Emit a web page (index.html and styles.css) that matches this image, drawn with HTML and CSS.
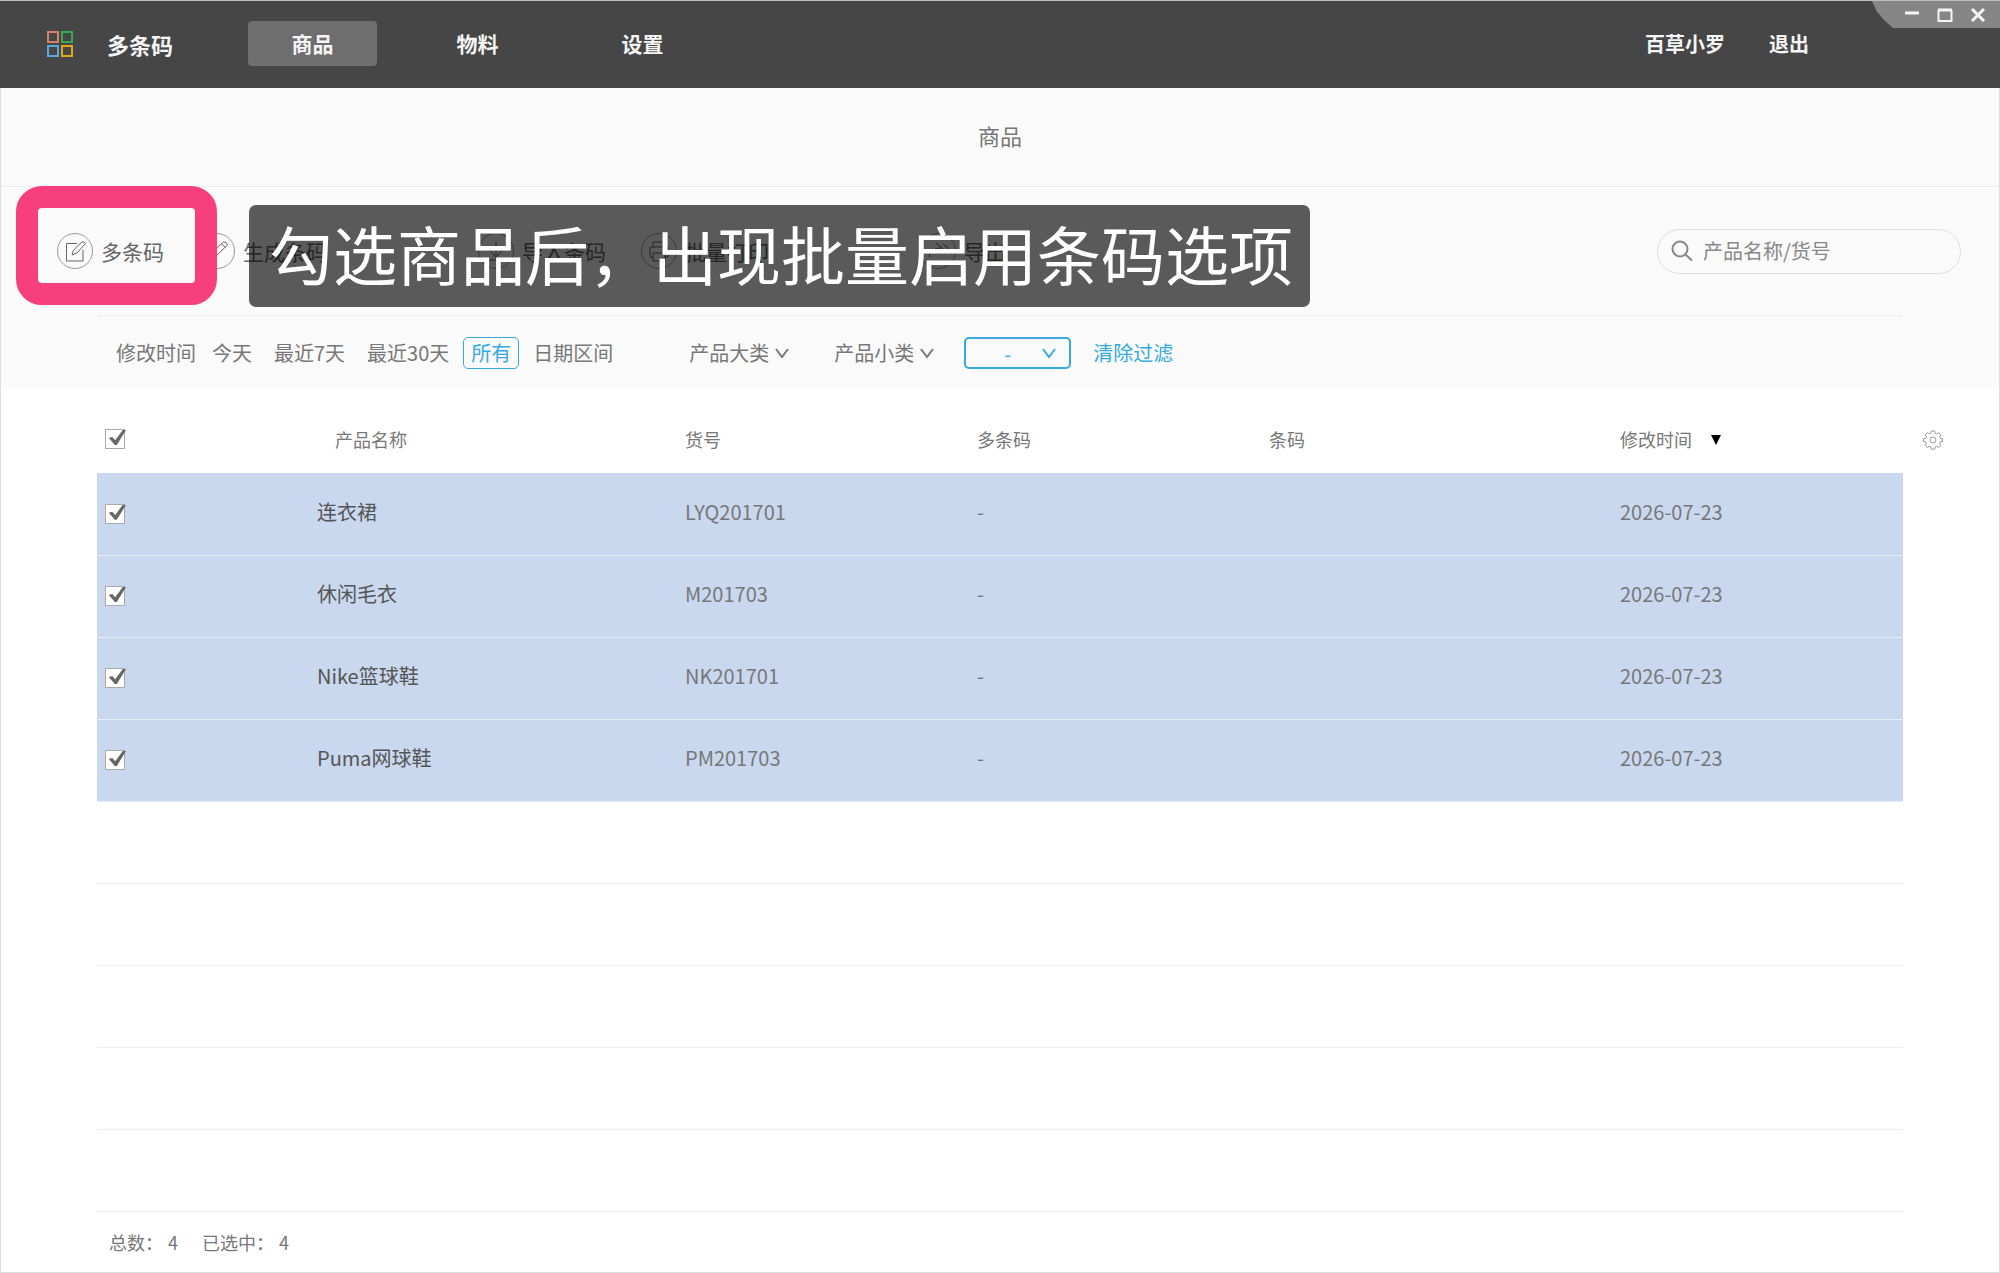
FILE: index.html
```html
<!DOCTYPE html>
<html lang="zh-CN">
<head>
<meta charset="utf-8"/>
<title>多条码</title>
<link rel="stylesheet" href="styles.css">
</head>
<body>
  <header class="topbar">
    <div class="brand">
      <svg class="logo" viewBox="0 0 26 26" width="26" height="26" fill="none" stroke-width="2">
        <rect x="1" y="1" width="10" height="10" stroke="#d9806a"/>
        <rect x="15" y="1" width="10" height="10" stroke="#35a853"/>
        <rect x="1" y="15" width="10" height="10" stroke="#5aa9dd"/>
        <rect x="15" y="15" width="10" height="10" stroke="#e0a61c"/>
      </svg>
      <span>多条码</span>
    </div>
    <nav class="nav">
      <a class="active" href="#">商品</a>
      <a href="#">物料</a>
      <a href="#">设置</a>
    </nav>
    <div class="user">
      <a href="#">百草小罗</a>
      <a href="#">退出</a>
    </div>
    <div class="window">
      <button aria-label="最小化"><svg viewBox="0 0 16 16" width="16" height="16"><path d="M1 6h14" stroke-width="3"/></svg></button>
      <button aria-label="最大化"><svg viewBox="0 0 16 16" width="16" height="16"><path d="M1.5 3v11h13V3"/><path d="M1 3h14" stroke-width="3"/></svg></button>
      <button aria-label="关闭"><svg viewBox="0 0 16 16" width="16" height="16"><path d="M2 2l12 12M14 2L2 14" stroke-width="3"/></svg></button>
    </div>
  </header>

  <main class="page">
    <h1 class="title">商品</h1>

    <div class="toolbar">
      <div class="tools">
        <button class="tool">
          <svg class="icon" viewBox="0 0 36 36" width="36" height="36">
            <circle cx="18" cy="18" r="17.5"/>
            <path d="M20 10.500H9.500V28h16.500V17"/>
            <path d="M15 22l1.500-5 8.500-8q2.500-.8 3.500 1.500L20 20z"/>
          </svg>
          多条码
        </button>
        <button class="tool">
          <svg class="icon" viewBox="0 0 36 36" width="36" height="36">
            <circle cx="18" cy="18" r="17.5"/>
            <path d="M9 27l2-6L24.500 9q3.500-.5 4 3L15 25z M22.500 11l4 3.500"/>
          </svg>
          生成条码
        </button>
      </div>
      <div class="tools">
        <button class="tool">
          <svg class="icon" viewBox="0 0 36 36" width="36" height="36">
            <circle cx="18" cy="18" r="17.5"/>
            <path d="M18 9v15M12 18l6 6 6-6M10 27h16"/>
          </svg>
          导入条码
        </button>
        <button class="tool">
          <svg class="icon" viewBox="0 0 36 36" width="36" height="36">
            <circle cx="18" cy="18" r="17.5"/>
            <path d="M12 14V9h12v5M12 24H9V14h18v10h-3M12 20h12v8H12z"/>
          </svg>
          批量打印
        </button>
      </div>
      <div class="tools">
        <button class="tool">
          <svg class="icon" viewBox="0 0 36 36" width="36" height="36">
            <circle cx="18" cy="18" r="17.5"/>
            <path d="M9 24q2-9 12-9M16 10l6 5-4 6M23 11l5 4-4 6"/>
          </svg>
          导出
        </button>
      </div>
      <label class="search">
        <svg viewBox="0 0 22 22" width="22" height="22"><circle cx="9" cy="9" r="7.5"/><path d="M14.500 14.500l6.500 6"/></svg>
        <input type="text" placeholder="产品名称/货号" aria-label="产品名称/货号">
      </label>
      <div class="highlight"></div>
      <div class="tip">勾选商品后，出现批量启用条码选项</div>
    </div>

    <div class="filter">
      <span class="filter-name">修改时间</span>
      <div class="ranges">
        <button>今天</button>
        <button>最近7天</button>
        <button>最近30天</button>
        <button class="on">所有</button>
        <button>日期区间</button>
      </div>
      <div class="pick">
        <select aria-label="产品大类"><option>产品大类</option></select>
        <svg viewBox="0 0 14 10" width="14" height="10"><path d="M1 1l6 8 6-8"/></svg>
      </div>
      <div class="pick">
        <select aria-label="产品小类"><option>产品小类</option></select>
        <svg viewBox="0 0 14 10" width="14" height="10"><path d="M1 1l6 8 6-8"/></svg>
      </div>
      <div class="pick boxed">
        <select aria-label="条码"><option>-</option></select>
        <svg viewBox="0 0 14 10" width="14" height="10"><path d="M1 1l6 8 6-8"/></svg>
      </div>
      <button class="clear">清除过滤</button>
    </div>

    <div class="list">
      <table class="goods">
        <thead>
          <tr>
            <th class="c-check"><input type="checkbox" checked aria-label="全选"></th>
            <th class="c-name">产品名称</th>
            <th class="c-code">货号</th>
            <th class="c-multi">多条码</th>
            <th class="c-bar">条码</th>
            <th>修改时间<svg class="sort" viewBox="0 0 10 10" width="10" height="10"><path d="M0 0h10L5 10z"/></svg></th>
          </tr>
        </thead>
        <tbody>
          <tr class="selected">
            <td><input type="checkbox" checked aria-label="连衣裙"></td>
            <td class="name">连衣裙</td>
            <td>LYQ201701</td>
            <td>-</td>
            <td></td>
            <td>2026-07-23</td>
          </tr>
          <tr class="selected">
            <td><input type="checkbox" checked aria-label="休闲毛衣"></td>
            <td class="name">休闲毛衣</td>
            <td>M201703</td>
            <td>-</td>
            <td></td>
            <td>2026-07-23</td>
          </tr>
          <tr class="selected">
            <td><input type="checkbox" checked aria-label="Nike篮球鞋"></td>
            <td class="name">Nike篮球鞋</td>
            <td>NK201701</td>
            <td>-</td>
            <td></td>
            <td>2026-07-23</td>
          </tr>
          <tr class="selected">
            <td><input type="checkbox" checked aria-label="Puma网球鞋"></td>
            <td class="name">Puma网球鞋</td>
            <td>PM201703</td>
            <td>-</td>
            <td></td>
            <td>2026-07-23</td>
          </tr>
          <tr><td colspan="6"></td></tr>
          <tr><td colspan="6"></td></tr>
          <tr><td colspan="6"></td></tr>
          <tr><td colspan="6"></td></tr>
          <tr><td colspan="6"></td></tr>
        </tbody>
      </table>
      <button class="gear" aria-label="列设置">
        <svg viewBox="0 0 20 20" width="20" height="20">
          <path d="M8.300 1h3.400l.5 2.300 1.500.6 2-1.300 2.200 2.200-1.300 2 .6 1.500 2.300.5v2.600l-2.300.5-.6 1.500 1.300 2-2.200 2.200-2-1.300-1.500.6-.5 2.300H8.300l-.5-2.300-1.500-.6-2 1.300-2.200-2.200 1.300-2-.6-1.500L.5 11.400V8.800l2.300-.5.6-1.500-1.300-2 2.200-2.200 2 1.300 1.500-.6z"/>
          <circle cx="10" cy="10" r="3"/>
        </svg>
      </button>
    </div>

    <footer class="total">
      <span>总数：<b>4</b></span>
      <span>已选中：<b>4</b></span>
    </footer>
  </main>
</body>
</html>
```
FILE: styles.css
```css
*{
  box-sizing:border-box;
  padding:0;
  margin:0;
}
body{
  display:flex;
  flex-direction:column;
  min-height:100vh;
  font-family:"Noto Sans CJK SC",sans-serif;
  font-size:20px;
  line-height:30px;
  color:#777;
  background-color:#fff;
}
button,input,select{
  font:inherit;
  color:inherit;
  background:none;
  border:0;
}
a{
  color:inherit;
  text-decoration:none;
}
svg{
  flex:none;
  fill:none;
  stroke:currentColor;
}

/* 顶部导航 */
.topbar{
  position:relative;
  display:flex;
  align-items:center;
  height:88px;
  padding:0 191px 2px 47px;
  border-top:1px solid #b9bdbd;
  background-color:#464646;
  color:#f5f5f5;
  font-weight:700;
}
.brand{
  display:flex;
  align-items:center;
  gap:34px;
  font-size:22px;
}
.nav{
  display:flex;
  gap:36px;
  margin-left:75px;
  font-size:21px;
}
.nav a{
  width:129px;
  line-height:45px;
  text-align:center;
  border-radius:4px;
}
.nav .active{
  background-color:#6e6e6e;
}
.user{
  display:flex;
  gap:44px;
  margin-left:auto;
}
.window{
  position:absolute;
  top:0;
  right:0;
  display:flex;
  align-items:center;
  gap:17px;
  width:128px;
  height:27px;
  padding-left:32px;
  background-color:#868686;
  clip-path:polygon(0 0,100% 0,100% 100%,21px 100%,12px 70%,5px 40%);
}
.window button{
  height:16px;
  line-height:0;
}
.window svg{
  stroke-width:2;
}

/* 页面 */
.page{
  flex:1;
  display:flex;
  flex-direction:column;
  border:1px solid #ddd;
  border-top:0;
  background:linear-gradient(#fafafa,#fafafa) no-repeat 0 0/100% 300px;
}
.title{
  height:99px;
  border-bottom:1px solid #eee;
  font-size:22px;
  font-weight:400;
  line-height:94px;
  text-align:center;
}
.toolbar{
  position:relative;
  display:flex;
  align-items:center;
  gap:151px;
  height:128px;
  padding:0 38px 0 56px;
}
.tools{
  display:flex;
  gap:35px;
}
.tool{
  display:flex;
  align-items:center;
  gap:8px;
  font-size:21px;
  color:#666;
}
.icon{
  color:#666;
}
.icon circle{
  stroke:#999;
}
.search{
  display:flex;
  align-items:center;
  gap:10px;
  width:304px;
  height:45px;
  margin-left:auto;
  padding:0 13px;
  border:1px solid #ddd;
  border-radius:23px;
}
.search svg{
  stroke-width:2;
  color:#888;
}
.search input{
  width:100%;
  min-width:0;
  outline:0;
}
.search input::placeholder{
  color:#888;
}
.highlight{
  position:absolute;
  left:15px;
  top:-1px;
  width:201px;
  height:119px;
  border:22px solid #f63f7c;
  border-radius:26px;
}
.tip{
  position:absolute;
  left:248px;
  top:18px;
  padding:0 17px 8px 20px;
  border-radius:7px;
  background-color:rgba(0,0,0,.64);
  color:#fff;
  font-size:64px;
  line-height:94px;
  white-space:nowrap;
}

/* 过滤条件 */
.filter{
  display:flex;
  align-items:center;
  height:74px;
  margin:0 96px;
  padding:1px 0 0 19px;
  border-top:1px solid #eee;
  white-space:nowrap;
}
.ranges{
  display:flex;
  gap:6px;
  margin:0 23px 0 8px;
}
.ranges button{
  padding:0 7px;
  border:1px solid transparent;
  border-radius:5px;
}
.ranges .on{
  border-color:#36a9e1;
  color:#36a9e1;
}
.pick{
  display:grid;
  align-items:center;
  margin-left:45px;
}
.pick select,
.pick svg{
  grid-area:1/1;
}
.pick select{
  width:100px;
  appearance:none;
  outline:0;
}
.pick svg{
  justify-self:end;
  stroke-width:2;
  pointer-events:none;
}
.boxed{
  margin-left:30px;
  color:#36a9e1;
}
.boxed select{
  width:107px;
  height:32px;
  padding:0 0 2px 38px;
  border:2px solid #36a9e1;
  border-radius:5px;
}
.boxed svg{
  margin-right:15px;
}
.clear{
  margin-left:22px;
  color:#36a9e1;
}

/* 商品列表 */
.list{
  display:flex;
  align-items:flex-start;
  padding-left:96px;
}
.goods{
  flex:1;
  width:100%;
  table-layout:fixed;
  border-collapse:collapse;
  text-align:left;
}
.goods th{
  height:84px;
  padding-top:16px;
  font-size:18px;
  font-weight:400;
}
.goods td{
  height:82px;
  padding-bottom:4px;
  border-bottom:1px solid #eee;
}
.goods td:first-child{
  padding-bottom:0;
}
.goods .name{
  color:#555;
}
.c-check{
  width:220px;
}
.c-name{
  width:368px;
}
.c-code,
.c-multi{
  width:292px;
}
.c-bar{
  width:351px;
}
.goods .c-name{
  padding-left:18px;
}
.selected{
  background-color:#c9d7ef;
}
.selected td{
  border-bottom-color:#e6edf8;
}
.goods input{
  display:block;
  width:20px;
  height:20px;
  margin-left:8px;
  appearance:none;
  border:1px solid #aaa;
  background-color:#fff;
}
.goods input:checked::before{
  content:"";
  display:block;
  width:20px;
  height:16px;
  background-color:#666;
  clip-path:polygon(14% 50%,31% 44%,46% 64%,84% 0,100% 0,54% 94%,44% 94%);
}
.sort{
  margin-left:19px;
  fill:#000;
  stroke:none;
  vertical-align:2px;
}
.gear{
  flex:none;
  width:96px;
  padding:41px 0 0 20px;
  line-height:0;
  text-align:left;
  color:#999;
}
.total{
  flex:1;
  display:flex;
  align-items:center;
  gap:24px;
  padding-left:108px;
  font-size:18px;
}
.total b{
  margin-left:5px;
  font-weight:400;
}
```
